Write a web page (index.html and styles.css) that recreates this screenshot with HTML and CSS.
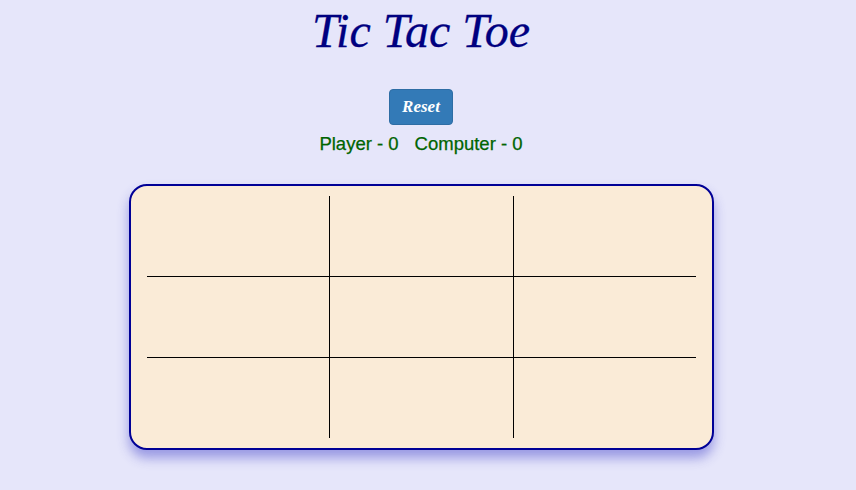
FILE: index.html
```html
<!DOCTYPE html>
<html>
<head>
<meta charset="utf-8">
<link rel="stylesheet" href="styles.css">
</head>
<body>
<div class="page">
  <h1 class="title">Tic Tac Toe</h1>
  <button class="reset">Reset</button>
  <div class="score"><span>Player - 0</span><span>Computer - 0</span></div>
  <div class="board">
    <div class="grid">
      <div class="cell"></div><div class="cell mid-col"></div><div class="cell"></div>
      <div class="cell mid-row"></div><div class="cell mid-row mid-col"></div><div class="cell mid-row"></div>
      <div class="cell"></div><div class="cell mid-col"></div><div class="cell"></div>
    </div>
  </div>
</div>
</body>
</html>
```
FILE: styles.css
```css
html, body {
  margin: 0;
  padding: 0;
  background: #e6e6fa;
}
.page {
  display: flex;
  flex-direction: column;
  align-items: center;
  width: 842px;
  height: 490px;
}
.title {
  margin: 3px 0 0 0;
  font-family: "Liberation Serif", serif;
  font-style: italic;
  font-weight: normal;
  font-size: 48px;
  line-height: 55px;
  color: #000080;
  -webkit-text-stroke: 0.3px #000080;
}
.reset {
  margin-top: 31px;
  width: 64px;
  height: 36px;
  background: #337ab7;
  border: 1px solid #2e6da4;
  border-radius: 4px;
  color: #fff;
  font-family: "Liberation Serif", serif;
  font-style: italic;
  font-weight: bold;
  font-size: 17px;
  padding: 0;
}
.score {
  margin-top: 8px;
  display: flex;
  gap: 16px;
  font-family: "Liberation Sans", sans-serif;
  font-size: 18.5px;
  line-height: 22px;
  color: #006400;
  -webkit-text-stroke: 0.25px #006400;
}
.board {
  margin-top: 29px;
  margin-left: 1px;
  width: 581px;
  height: 262px;
  box-sizing: content-box;
  border: 2px solid #000096;
  border-radius: 18px;
  background: #faebd7;
  box-shadow: 0 8px 12px rgba(60, 60, 200, 0.45);
  padding: 0;
  display: flex;
  justify-content: center;
  align-items: center;
}
.grid {
  display: grid;
  grid-template-columns: 182px 185px 182px;
  grid-template-rows: 80px 82px 80px;
  margin-top: -1px;
}
.cell {
  box-sizing: border-box;
}
.mid-col {
  border-left: 1px solid #000;
  border-right: 1px solid #000;
}
.mid-row {
  border-top: 1px solid #000;
  border-bottom: 1px solid #000;
}
```
